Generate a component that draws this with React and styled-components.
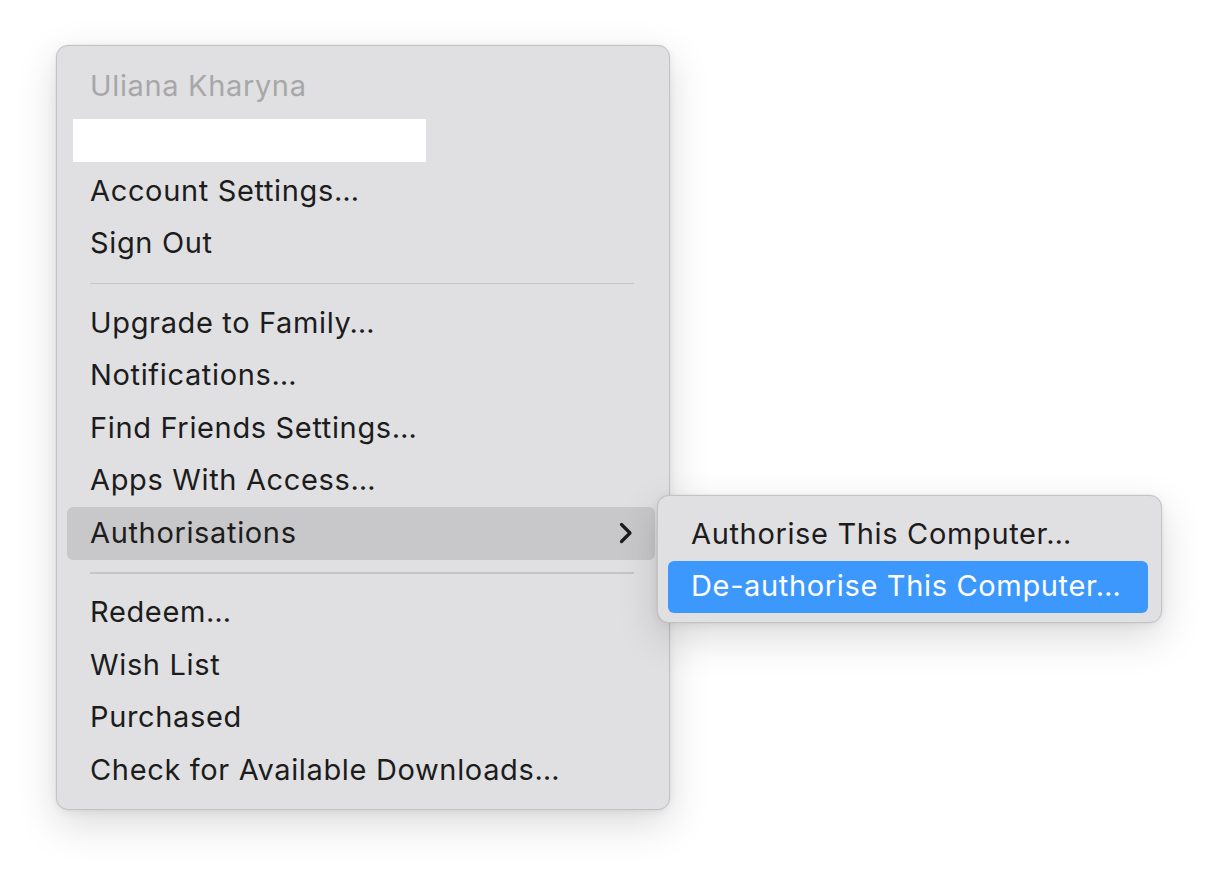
import React from "react";
import styled, { createGlobalStyle } from "styled-components";

const Global = createGlobalStyle`
  html, body { margin: 0; padding: 0; background: #ffffff; }
  body { font-family: Inter, "Noto Sans", "Liberation Sans", sans-serif; -webkit-font-smoothing: antialiased; }
`;

const Page = styled.div`
  width: 1216px;
  height: 873px;
  box-sizing: border-box;
  padding: 45px 0 0 56px;
  background: #ffffff;
`;

const Anchor = styled.div`
  position: relative;
  width: 614px;
`;

const Menu = styled.div`
  box-sizing: border-box;
  width: ${(p) => p.$w}px;
  display: flex;
  flex-direction: column;
  padding: ${(p) => p.$pad};
  background: #e0e0e2;
  border: 1px solid #c3c3c5;
  border-radius: 12px;
  box-shadow: 0 0 0 0.5px rgba(0, 0, 0, 0.05), 0 14px 40px rgba(0, 0, 0, 0.15),
    0 2px 10px rgba(0, 0, 0, 0.06);
`;

const SubMenu = styled(Menu)`
  position: absolute;
  left: 601px;
  top: 450px;
  z-index: 2;
`;

const Item = styled.div`
  display: flex;
  align-items: center;
  height: 52.5px;
  padding: 0 24px 0 23px;
  border-radius: 6px;
  font-size: 29px;
  letter-spacing: 0.65px;
  color: ${(p) => (p.$active ? "#ffffff" : p.$disabled ? "#a7a7a9" : "#1c1c1c")};
  background: ${(p) =>
    p.$active ? "#3d98fd" : p.$hover ? "#c8c8ca" : "transparent"};
  white-space: nowrap;
`;

const Label = styled.span`
  flex: 1;
  position: relative;
  top: -1px;
`;

const Redacted = styled.div`
  height: 52.5px;
  display: flex;
  align-items: center;
  margin-left: 6px;
`;

const WhiteBox = styled.div`
  width: 353px;
  height: 43px;
  margin-top: 4px;
  background: #ffffff;
`;

const Separator = styled.div`
  height: 27px;
  display: flex;
  align-items: center;
  padding: 0 21px 0 23px;
  &::after {
    content: "";
    flex: 1;
    height: 1.5px;
    background: #c5c5c7;
  }
`;

const Chevron = () => (
  <svg width="16" height="22" viewBox="0 0 16 22" style={{ marginRight: -2 }}>
    <path
      d="M4.5 2.5 L13 11 L4.5 19.5"
      fill="none"
      stroke="#1c1c1c"
      strokeWidth="3.2"
      strokeLinecap="round"
      strokeLinejoin="round"
    />
  </svg>
);

export default function App() {
  return (
    <Page>
      <Global />
      <Anchor>
        <Menu $w={614} $pad="14px 14px 12px 10px">
          <Item $disabled>
            <Label>Uliana Kharyna</Label>
          </Item>
          <Redacted>
            <WhiteBox />
          </Redacted>
          <Item>
            <Label>Account Settings…</Label>
          </Item>
          <Item>
            <Label>Sign Out</Label>
          </Item>
          <Separator />
          <Item>
            <Label>Upgrade to Family…</Label>
          </Item>
          <Item>
            <Label>Notifications…</Label>
          </Item>
          <Item>
            <Label>Find Friends Settings…</Label>
          </Item>
          <Item>
            <Label>Apps With Access…</Label>
          </Item>
          <Item $hover>
            <Label>Authorisations</Label>
            <Chevron />
          </Item>
          <Separator />
          <Item>
            <Label>Redeem…</Label>
          </Item>
          <Item>
            <Label>Wish List</Label>
          </Item>
          <Item>
            <Label>Purchased</Label>
          </Item>
          <Item>
            <Label>Check for Available Downloads…</Label>
          </Item>
        </Menu>
        <SubMenu $w={505} $pad="12px 13px 9px 10px">
          <Item>
            <Label>Authorise This Computer…</Label>
          </Item>
          <Item $active>
            <Label>De-authorise This Computer…</Label>
          </Item>
        </SubMenu>
      </Anchor>
    </Page>
  );
}
